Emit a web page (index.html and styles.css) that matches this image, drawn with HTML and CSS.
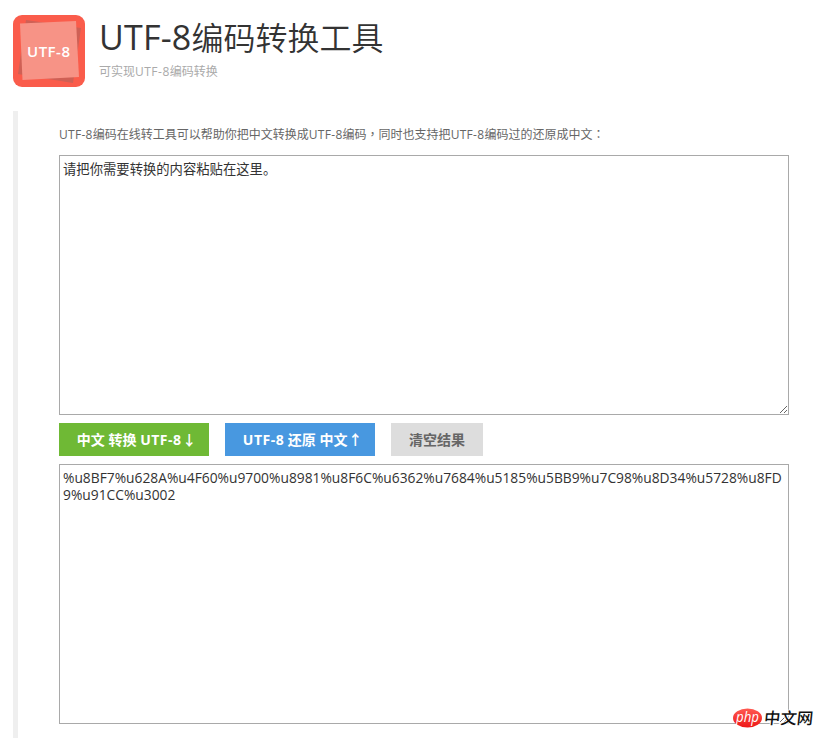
FILE: index.html
```
<!DOCTYPE html>
<html lang="zh-CN">
  <head>
    <meta charset="utf-8">
    <title>UTF-8编码转换工具</title>
    <link rel="stylesheet" href="styles.css">
  </head>

  <body>
    <div class="header">
      <svg class="logo" width="72" height="72" viewBox="0 0 72 72">
        <rect width="72" height="72" rx="9" fill="#fa5c4b"/>
        <path d="M13 5L68 13L60 68L5 59Z" fill="#cf6055"/>
        <path d="M7 8.500L63 6L66 62L9.500 65Z" fill="#f79386"/>
        <text class="logo-text" x="14" y="41.500" textLength="43">UTF-8</text>
      </svg>
      <div class="heading">
        <h1><span class="latin">UTF-8</span>编码转换工具</h1>
        <p>可实现<span class="latin">UTF-8</span>编码转换</p>
      </div>
    </div>

    <div class="content">
      <p class="intro"><span class="latin">UTF-8</span>编码在线转工具可以帮助你把中文转换成<span class="latin">UTF-8</span>编码<span class="punct" lang="zh-TW">，</span>同时也支持把<span class="latin">UTF-8</span>编码过的还原成中文<span class="punct" lang="zh-TW">：</span></p>
      <textarea id="content">请把你需要转换的内容粘贴在这里。</textarea>
      <div class="btns">
        <button class="btn green">中文 转换 <span class="latin">UTF-8</span> <span class="arrow">↓</span></button>
        <button class="btn blue"><span class="latin">UTF-8</span> 还原 中文 <span class="arrow">↑</span></button>
        <button class="btn gray">清空结果</button>
      </div>
      <textarea id="result" class="result">%u8BF7%u628A%u4F60%u9700%u8981%u8F6C%u6362%u7684%u5185%u5BB9%u7C98%u8D34%u5728%u8FD9%u91CC%u3002</textarea>
    </div>

    <!-- site watermark -->
    <svg class="watermark" width="84" height="28" viewBox="0 0 84 28">
      <defs>
        <linearGradient id="red" x1="0" y1="0" x2="0" y2="1">
          <stop offset="0" stop-color="#ff5a52"/>
          <stop offset="1" stop-color="#ee1717"/>
        </linearGradient>
      </defs>
      <ellipse cx="15.500" cy="12" rx="14.500" ry="9.500" fill="url(#red)"/>
      <text class="php" x="4" y="15.500" textLength="23" lengthAdjust="spacingAndGlyphs">php</text>
      <text class="site" x="33.500" y="18" textLength="49" lengthAdjust="spacingAndGlyphs" transform="skewX(-6)">中文网</text>
    </svg>
  </body>
</html>
```

FILE: styles.css
```
body {
  margin: 0;
  height: 738px;
  overflow: hidden;
  background: #fff;
  color: #333;
  font-family: "Open Sans", "Noto Sans CJK SC", sans-serif;
  display: flex;
  flex-direction: column;
}
h1, p {
  margin: 0;
  font-weight: 400;
}
.latin {
  letter-spacing: 0.5px;
}

/* header */
.header {
  display: flex;
  box-sizing: border-box;
  height: 111px;
  padding: 15px 0 0 13px;
}
.logo {
  flex: none;
}
.logo-text {
  font: 600 15px "Open Sans", sans-serif;
  fill: #fff;
}
.heading {
  padding-left: 14px;
}
.heading h1 {
  height: 47px;
  line-height: 45px;
  font-size: 32px;
  font-weight: 350;
  white-space: nowrap;
}
.heading h1 .latin {
  font-size: 34px;
  font-weight: 400;
  letter-spacing: 0.2px;
}
.heading p {
  font-size: 12px;
  line-height: 20px;
  color: #aaa;
}

/* converter */
.content {
  flex: 1;
  margin-left: 13px;
  padding: 13px 0 0 41px;
  border-left: 5px solid #efefef;
}
.intro {
  height: 31px;
  line-height: 20px;
  font-size: 12px;
  color: #666;
  white-space: nowrap;
}
.intro .latin {
  letter-spacing: 0.3px;
}
.punct {
  font-family: "Noto Sans CJK TC", sans-serif;
}
textarea {
  display: block;
  box-sizing: border-box;
  width: 730px;
  height: 260px;
  margin: 0;
  padding: 4px 3px;
  border: 1px solid #a9a9a9;
  border-radius: 0;
  outline: none;
  font-family: inherit;
  font-size: 13.333px;
  line-height: 18px;
  color: #333;
}
.result {
  word-break: break-all;
  font-size: 13.8px;
  line-height: 17px;
}
.btns {
  display: flex;
  gap: 16px;
  padding: 8px 0;
}
.btn {
  width: 150px;
  height: 33px;
  padding: 0 0 2px;
  border: none;
  font-family: inherit;
  font-size: 14px;
  font-weight: 700;
  color: #fff;
  white-space: nowrap;
}
.arrow {
  display: inline-block;
  width: 7px;
  text-indent: -3px;
}
.green {
  padding-left: 1px;
  background: #6fb935;
}
.blue {
  padding-left: 1px;
  background: #4898e0;
}
.gray {
  width: 92px;
  background: #ddd;
  color: #666;
}

.watermark {
  position: absolute;
  left: 732px;
  top: 706px;
}
.php {
  font: italic 500 14px "Open Sans", sans-serif;
  fill: #fff;
}
.site {
  font: 500 16px "Noto Sans CJK SC", sans-serif;
  fill: #111;
  stroke: #fff;
  stroke-width: 2px;
  paint-order: stroke;
}
```
